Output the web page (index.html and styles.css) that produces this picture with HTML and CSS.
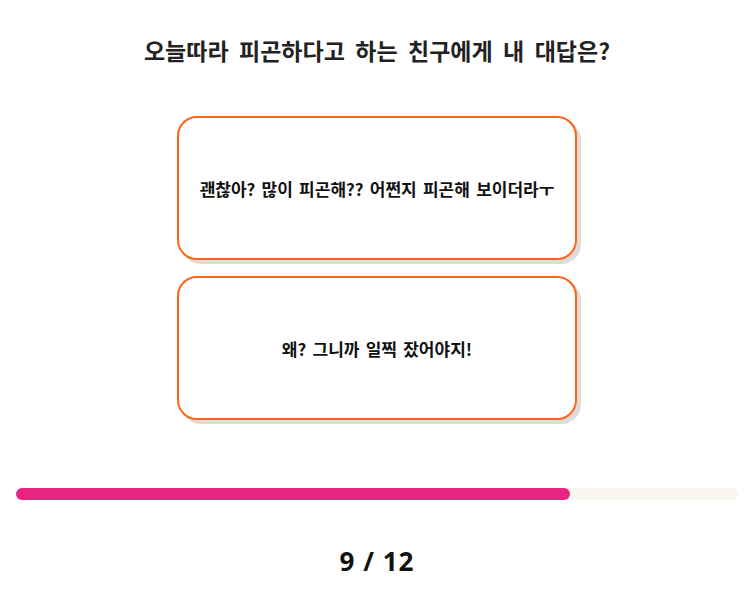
FILE: index.html
```html
<!DOCTYPE html>
<html lang="ko">
<head>
<meta charset="utf-8">
<link rel="stylesheet" href="styles.css">
</head>
<body>
<div class="page">
  <h1 class="question">오늘따라 피곤하다고 하는 친구에게 내 대답은?</h1>
  <div class="answers">
    <button class="answer">괜찮아? 많이 피곤해?? 어쩐지 피곤해 보이더라ㅜ</button>
    <button class="answer">왜? 그니까 일찍 잤어야지!</button>
  </div>
  <div class="progress"><div class="progress-fill" style="width: 76.7%"></div></div>
  <div class="count">9 / 12</div>
</div>
</body>
</html>
```
FILE: styles.css
```css
html, body {
  margin: 0;
  padding: 0;
  background: #fff;
}
body {
  font-family: "Noto Sans CJK KR", "Noto Sans", sans-serif;
}
.page {
  padding: 0 10px 0 16px;
  display: flex;
  flex-direction: column;
  align-items: center;
}
.question {
  margin: 35px 0 0;
  font-size: 23px;
  font-weight: 700;
  color: #222;
  line-height: 30px;
  word-spacing: 4px;
  text-align: center;
}
.answers {
  margin-top: 51px;
  display: flex;
  flex-direction: column;
  gap: 16px;
}
.answer {
  width: 400px;
  height: 144px;
  border: 2px solid #ff6412;
  border-radius: 20px;
  background: #fff;
  box-shadow: 4px 4px 0 #dcdcdc;
  font-family: "Noto Sans CJK KR", "Noto Sans", sans-serif;
  font-size: 17px;
  font-weight: 700;
  color: #111;
  word-spacing: 1.5px;
  padding: 0;
}
.progress {
  align-self: stretch;
  margin-top: 68px;
  height: 12px;
  border-radius: 6px;
  background: #f9f6f1;
}
.progress-fill {
  height: 100%;
  border-radius: 6px;
  background: #e72583;
}
.count {
  margin-top: 46px;
  font-family: "Open Sans", "Noto Sans", sans-serif;
  font-size: 26px;
  font-weight: 700;
  letter-spacing: 1px;
  color: #111;
  line-height: 30px;
}
```
